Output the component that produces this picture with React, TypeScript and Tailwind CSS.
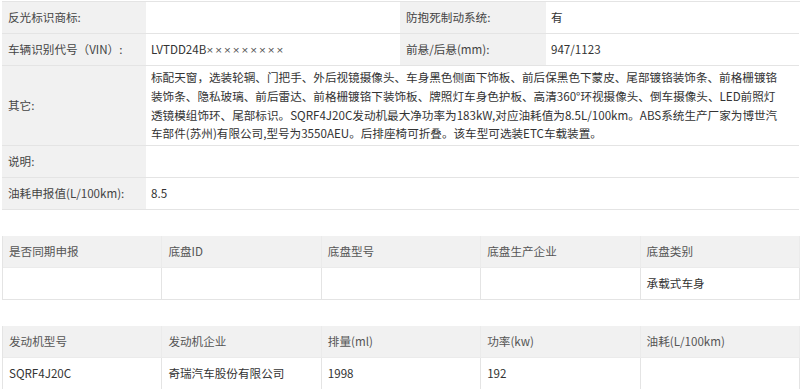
import React from "react";

const font = { fontFamily: '"Noto Sans CJK SC", "Noto Sans", sans-serif' };

function Label({ children, tall = false }: { children?: React.ReactNode; tall?: boolean }) {
  return (
    <div className={`bg-[#f1f1f1] text-[#444] pl-[6px] flex items-center border-b border-[#e4e4e4] ${tall ? "h-[80px]" : "h-[32px]"}`}>
      {children}
    </div>
  );
}

function Value({ children, span = false }: { children?: React.ReactNode; span?: boolean }) {
  return (
    <div className={`bg-white text-[#333] pl-[5px] flex items-center border-b border-[#e4e4e4] h-[32px] ${span ? "col-span-3" : ""}`}>
      {children}
    </div>
  );
}

const otherLines = [
  "标配天窗，选装轮辋、门把手、外后视镜摄像头、车身黑色侧面下饰板、前后保黑色下蒙皮、尾部镀铬装饰条、前格栅镀铬",
  "装饰条、隐私玻璃、前后雷达、前格栅镀铬下装饰板、牌照灯车身色护板、高清360°环视摄像头、倒车摄像头、LED前照灯",
  "透镜模组饰环、尾部标识。SQRF4J20C发动机最大净功率为183kW,对应油耗值为8.5L/100km。ABS系统生产厂家为博世汽",
  "车部件(苏州)有限公司,型号为3550AEU。后排座椅可折叠。该车型可选装ETC车载装置。",
];

function SmallTable({ head, body }: { head: string[]; body: string[] }) {
  return (
    <div className="grid grid-cols-5 border-l border-[#e4e4e4] w-[798px]">
      {head.map((h, i) => (
        <div key={"h" + i} className="h-[32px] bg-[#f1f1f1] text-[#555] pl-[6px] flex items-center border-r border-b border-[#ebebeb]">
          {h}
        </div>
      ))}
      {body.map((b, i) => (
        <div key={"b" + i} className="h-[32px] bg-white text-[#333] pl-[6px] flex items-center border-r border-b border-[#e4e4e4]">
          {b}
        </div>
      ))}
    </div>
  );
}

export default function App() {
  return (
    <div className="w-[800px] h-[389px] overflow-hidden bg-white text-[11.6px]" style={font}>
      <div className="pl-[2px] pt-[1px]">
        <div className="grid grid-cols-[144px_254px_146px_253px] border-t border-[#e4e4e4]">
          <Label>反光标识商标:</Label>
          <Value />
          <Label>防抱死制动系统:</Label>
          <Value>有</Value>

          <Label>车辆识别代号（VIN）:</Label>
          <Value>
            LVTDD24B
            <span className="tracking-[2px] text-[#555]" style={{ fontFamily: '"Liberation Sans", sans-serif' }}>
              ×××××××××
            </span>
          </Value>
          <Label>前悬/后悬(mm):</Label>
          <Value>947/1123</Value>

          <Label tall>其它:</Label>
          <div className="col-span-3 h-[80px] bg-white text-[#333] pl-[5px] flex flex-col justify-center leading-[18.7px] border-b border-[#e4e4e4] whitespace-nowrap">
            {otherLines.map((l, i) => (
              <div key={i}>{l}</div>
            ))}
          </div>

          <Label>说明:</Label>
          <Value span />

          <Label>油耗申报值(L/100km):</Label>
          <Value span>8.5</Value>
        </div>

        <div className="mt-[26px]">
          <SmallTable
            head={["是否同期申报", "底盘ID", "底盘型号", "底盘生产企业", "底盘类别"]}
            body={["", "", "", "", "承载式车身"]}
          />
        </div>

        <div className="mt-[26px]">
          <SmallTable
            head={["发动机型号", "发动机企业", "排量(ml)", "功率(kw)", "油耗(L/100km)"]}
            body={["SQRF4J20C", "奇瑞汽车股份有限公司", "1998", "192", ""]}
          />
        </div>
      </div>
    </div>
  );
}
